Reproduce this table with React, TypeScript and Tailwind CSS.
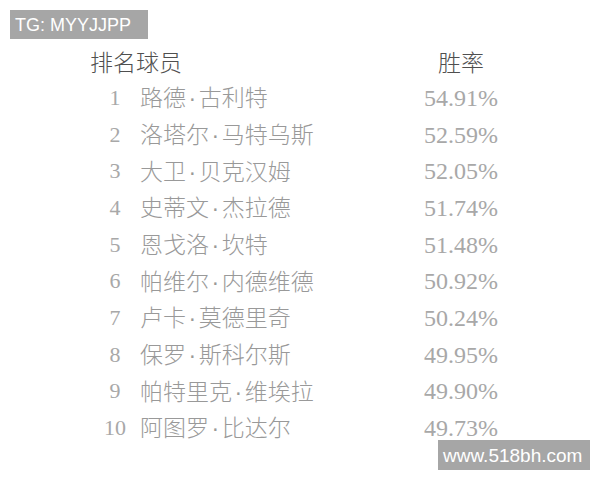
import React from "react";

const rows: [string, string, string][] = [
  ["1", "路德·古利特", "54.91%"],
  ["2", "洛塔尔·马特乌斯", "52.59%"],
  ["3", "大卫·贝克汉姆", "52.05%"],
  ["4", "史蒂文·杰拉德", "51.74%"],
  ["5", "恩戈洛·坎特", "51.48%"],
  ["6", "帕维尔·内德维德", "50.92%"],
  ["7", "卢卡·莫德里奇", "50.24%"],
  ["8", "保罗·斯科尔斯", "49.95%"],
  ["9", "帕特里克·维埃拉", "49.90%"],
  ["10", "阿图罗·比达尔", "49.73%"],
];

function Name({ text }: { text: string }) {
  const [a, b] = text.split("·");
  return (
    <>
      {a}
      <span className="font-['Liberation_Sans',sans-serif] mx-[2.5px]">·</span>
      {b}
    </>
  );
}

export default function App() {
  return (
    <div className="relative w-[600px] h-[480px] bg-white overflow-hidden font-['Noto_Sans_CJK_SC',sans-serif]">
      <div className="flex flex-col pt-[43px] pl-[90px]">
        <div className="flex items-center h-[36.67px]">
          <div className="w-[333px] text-[23px] font-light text-[#4f4f4f] leading-none">排名球员</div>
          <div className="w-[76px] text-center text-[23px] font-light text-[#4f4f4f] leading-none">胜率</div>
        </div>
        {rows.map(([n, name, pct]) => (
          <div key={n} className="flex items-center h-[36.67px]">
            <div className="w-[50px] text-center font-['Liberation_Serif',serif] text-[22px] text-[#a8a8a8] leading-none">
              {n}
            </div>
            <div className="w-[283px] text-[23px] font-light text-[#999999] leading-none whitespace-nowrap">
              <Name text={name} />
            </div>
            <div className="w-[76px] text-center font-['Liberation_Serif',serif] text-[24px] text-[#a8a8a8] leading-none">
              {pct}
            </div>
          </div>
        ))}
      </div>
      <div className="absolute left-[10px] top-[10px] w-[138px] h-[29px] bg-[#a6a6a6] flex items-center pl-[5px] font-['Liberation_Sans',sans-serif] text-[18px] text-white leading-none">
        TG: MYYJJPP
      </div>
      <div className="absolute left-[438px] top-[440px] w-[152px] h-[30px] bg-[#a6a6a6] flex items-center pl-[5px] font-['Liberation_Sans',sans-serif] text-[19px] text-white leading-none">
        www.518bh.com
      </div>
    </div>
  );
}
